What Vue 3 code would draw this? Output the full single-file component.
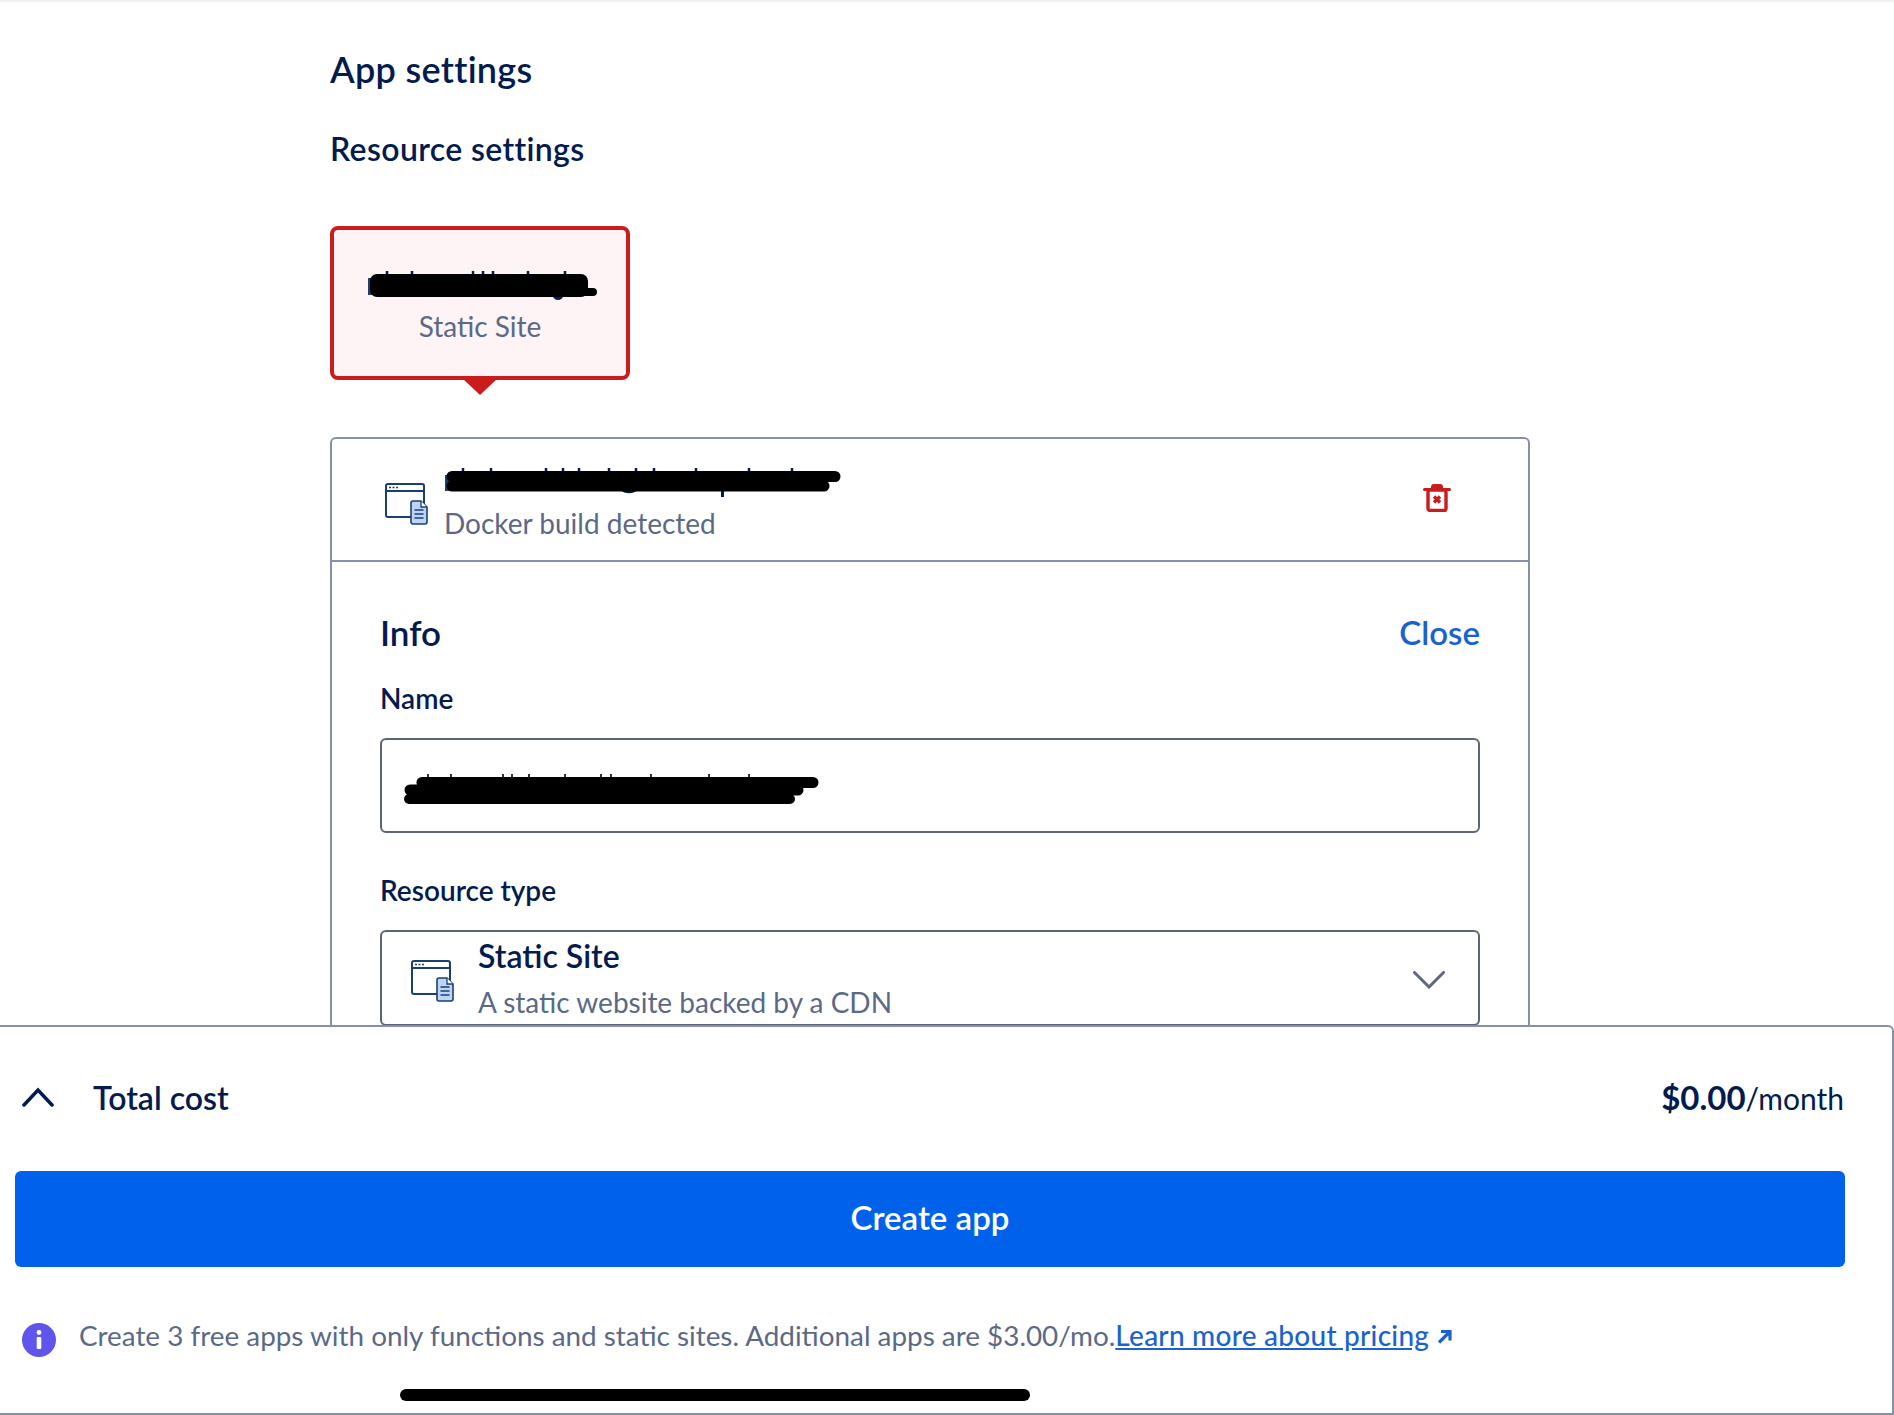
<script setup>
const inkTicksTab = [19, 44, 105, 115, 125, 160, 197]
const inkTicksHead = [18, 46, 101, 118, 134, 164, 191, 209, 251, 304, 347]
const inkTicksInput = [24, 47, 99, 108, 125, 161, 197, 207, 247, 305, 345]
</script>

<template>
  <div class="page">
    <div class="topline"></div>
    <main class="content">
      <h1 class="app-title">App settings</h1>
      <h2 class="res-title">Resource settings</h2>

      <div class="tab">
        <div class="tab-name">
          <svg class="ink ink-tab" viewBox="0 0 232 32">
            <path v-for="x in inkTicksTab" :key="x" :d="`M${x} 2v4`" stroke="#031b4e" stroke-width="2.500" />
            <path d="M0 9h4v17H0z" fill="#1c3f73" />
            <path d="M185 27a5 4 0 0 0 10 0z" fill="#031b4e" />
            <rect x="2" y="5" width="218" height="23" rx="7" fill="#000" />
            <path d="M214 23h11" stroke="#000" stroke-width="8" stroke-linecap="round" />
          </svg>
        </div>
        <div class="tab-sub">Static Site</div>
        <span class="tab-arrow"></span>
      </div>

      <section class="panel">
        <header class="panel-head">
          <svg class="ink ink-head" viewBox="0 0 396 30">
            <path v-for="x in inkTicksHead" :key="x" :d="`M${x} 2v4`" stroke="#031b4e" stroke-width="2.500" />
            <path d="M0 9h4v16H0z" fill="#1c3f73" />
            <path d="M176 24a9 6 0 0 0 16 0zM276 24h3v7h-3z" fill="#031b4e" />
            <path d="M7 10.500H390" stroke="#000" stroke-width="11" stroke-linecap="round" />
            <path d="M7 20H379" stroke="#000" stroke-width="11" stroke-linecap="round" />
          </svg>
          <svg class="site-icon" viewBox="0 0 44 42">
            <rect x="1" y="1" width="38" height="33" rx="2" fill="#fff" stroke="#1c3f73" stroke-width="2" />
            <path d="M1 8h38" stroke="#1c3f73" stroke-width="2" />
            <path d="M4 4.500h2M7.500 4.500h2M11 4.500h2" stroke="#1c3f73" stroke-width="1.500" />
            <path d="M28 18h8l6 6v15a2 2 0 0 1-2 2H28a2 2 0 0 1-2-2V20a2 2 0 0 1 2-2z" fill="#bcd4f6" stroke="#1c3f73" stroke-width="1.600" />
            <path d="M36 18v6h6" fill="#fff" stroke="#1c3f73" stroke-width="1.300" />
            <path d="M29.500 27h9M29.500 31h9M29.500 35h9" stroke="#1c3f73" stroke-width="1.700" />
          </svg>
          <div class="head-text">
            <div class="head-sub">Docker build detected</div>
          </div>
          <svg class="trash" viewBox="0 0 28 29">
            <path d="M1.500 6.500h25" stroke="#c91c1c" stroke-width="3" stroke-linecap="round" />
            <path d="M8 6V4a3 3 0 0 1 3-3h6a3 3 0 0 1 3 3v2z" fill="#c91c1c" />
            <rect x="5" y="7" width="18" height="20.500" rx="2" fill="#fff" stroke="#c91c1c" stroke-width="3.400" />
            <path d="M11 13.500l6 6M17 13.500l-6 6" stroke="#c91c1c" stroke-width="3.400" />
          </svg>
        </header>

        <div class="panel-body">
          <div class="info-row">
            <h3 class="info-title">Info</h3>
            <a class="close">Close</a>
          </div>
          <label class="field-label name-label">Name</label>
          <div class="input">
            <svg class="ink ink-input" viewBox="0 0 416 34">
              <path v-for="x in inkTicksInput" :key="x" :d="`M${x} 3v4`" stroke="#333" stroke-width="2" />
              <path d="M18 11.500H409" stroke="#000" stroke-width="11" stroke-linecap="round" />
              <path d="M6 19H394" stroke="#000" stroke-width="11" stroke-linecap="round" />
              <path d="M5 28H386" stroke="#000" stroke-width="10" stroke-linecap="round" />
            </svg>
          </div>
          <label class="field-label type-label">Resource type</label>
          <div class="select">
            <svg class="site-icon select-icon" viewBox="0 0 44 42">
              <rect x="1" y="1" width="38" height="33" rx="2" fill="#fff" stroke="#1c3f73" stroke-width="2" />
              <path d="M1 8h38" stroke="#1c3f73" stroke-width="2" />
              <path d="M4 4.500h2M7.500 4.500h2M11 4.500h2" stroke="#1c3f73" stroke-width="1.500" />
              <path d="M28 18h8l6 6v15a2 2 0 0 1-2 2H28a2 2 0 0 1-2-2V20a2 2 0 0 1 2-2z" fill="#bcd4f6" stroke="#1c3f73" stroke-width="1.600" />
              <path d="M36 18v6h6" fill="#fff" stroke="#1c3f73" stroke-width="1.300" />
              <path d="M29.500 27h9M29.500 31h9M29.500 35h9" stroke="#1c3f73" stroke-width="1.700" />
            </svg>
            <div class="select-text">
              <div class="select-name">Static Site</div>
              <div class="select-sub">A static website backed by a CDN</div>
            </div>
            <svg class="select-chev" viewBox="0 0 32 18">
              <path d="M1.500 1.500L16 16 30.500 1.500" fill="none" stroke="#5f6880" stroke-width="3" stroke-linecap="round" />
            </svg>
          </div>
        </div>
      </section>
    </main>

    <footer class="footer">
      <div class="cost-row">
        <svg class="cost-chev" viewBox="0 0 32 20">
          <path d="M2 18L16 3l14 15" fill="none" stroke="#031b4e" stroke-width="3.500" stroke-linecap="round" />
        </svg>
        <span class="cost-label">Total cost</span>
        <span class="cost-value"><b>$0.00</b>/month</span>
      </div>
      <button class="create">Create app</button>
      <div class="note">
        <svg class="note-icon" viewBox="0 0 34 34">
          <circle cx="17" cy="17" r="17" fill="#5f55ec" />
          <circle cx="17" cy="9.500" r="2.400" fill="#fff" />
          <rect x="14.700" y="14" width="4.600" height="12" rx="1" fill="#fff" />
        </svg>
        <p class="note-text">Create 3 free apps with only functions and static sites. Additional apps are $3.00/mo.<a class="note-link">Learn more about pricing</a></p>
        <svg class="note-arrow" viewBox="0 0 15 15">
          <path d="M2 13.500L12.500 3M4 2.500h9v9" fill="none" stroke="#1c62cf" stroke-width="3.200" />
        </svg>
      </div>
      <div class="homebar"></div>
    </footer>
  </div>
</template>

<style>
html, body { margin: 0; background: #fff; }
</style>

<style scoped>
.page {
  position: relative;
  height: 1415px;
  overflow: hidden;
  background: #fff;
  color: #031b4e;
  font-family: "Lato", "Liberation Sans", sans-serif;
}
.topline { height: 2px; background: #f0f0f0; }
.content { padding: 46px 364px 0 330px; }
.app-title { margin: 0; font-size: 36px; line-height: 42px; font-weight: 600; letter-spacing: 0.3px; }
.res-title { margin: 41px 0 0; font-size: 32px; line-height: 36px; font-weight: 600; letter-spacing: 0.35px; }

.tab {
  position: relative;
  box-sizing: border-box;
  width: 300px;
  height: 154px;
  margin-top: 59px;
  border: 4px solid #c91c1c;
  border-radius: 8px;
  background: #fef4f5;
  text-align: center;
}
.tab-name { height: 36px; margin-top: 43px; }
.tab-sub { font-size: 28px; line-height: 34px; color: #5b6987; }
.tab-arrow {
  position: absolute;
  left: 129px;
  bottom: -19px;
  width: 0;
  height: 0;
  border-left: 17px solid transparent;
  border-right: 17px solid transparent;
  border-top: 16px solid #c91c1c;
}
.ink { position: absolute; display: block; overflow: visible; }
.ink-tab { left: 34px; top: 39px; width: 232px; height: 32px; }
.ink-head { left: 113px; top: 27px; width: 396px; height: 30px; }
.ink-input { left: 22px; top: 31px; width: 416px; height: 34px; }

.panel {
  box-sizing: border-box;
  width: 1200px;
  height: 800px;
  margin-top: 57px;
  border: 2px solid #8690a8;
  border-radius: 6px;
}
.panel-head {
  position: relative;
  box-sizing: border-box;
  display: flex;
  align-items: center;
  height: 123px;
  padding: 0 77px 0 53px;
  border-bottom: 2px solid #8690a8;
}
.site-icon { width: 44px; height: 42px; flex: none; }
.panel-head .site-icon { margin-top: 8px; }
.head-text { flex: 1; align-self: flex-start; margin-left: 15px; padding-top: 67px; }
.head-sub { font-size: 28px; line-height: 34px; color: #5b6987; }
.trash { width: 28px; height: 29px; flex: none; margin-bottom: 4px; }
.panel-body { padding: 0 48px; }
.info-row { display: flex; justify-content: space-between; align-items: center; height: 42px; margin-top: 49px; }
.info-title { margin: 0; font-size: 35px; line-height: 42px; font-weight: 600; }
.close { font-size: 33px; font-weight: 600; color: #1c62cf; }
.field-label { display: block; font-size: 28px; line-height: 32px; font-weight: 600; }
.name-label { margin-top: 29px; }
.input {
  position: relative;
  box-sizing: border-box;
  height: 95px;
  margin-top: 24px;
  border: 2px solid #5b6478;
  border-radius: 6px;
}
.type-label { margin-top: 41px; }
.select {
  position: relative;
  box-sizing: border-box;
  display: flex;
  align-items: center;
  height: 96px;
  margin-top: 24px;
  padding: 0 33px 0 29px;
  border: 2px solid #5b6478;
  border-radius: 6px;
}
.select-icon { margin-top: 6px; }
.select-text { flex: 1; margin-left: 23px; }
.select-name { font-size: 32px; line-height: 38px; font-weight: 600; }
.select-sub { font-size: 28px; line-height: 34px; color: #5b6987; margin-top: 10px; }
.select-chev { width: 32px; height: 18px; flex: none; margin-top: 3px; }

.footer {
  position: absolute;
  left: 0;
  right: 0;
  bottom: 0;
  box-sizing: border-box;
  height: 390px;
  background: #fff;
  border: 2px solid #8690a8;
  border-left: 0;
  border-top-right-radius: 6px;
}
.cost-row { display: flex; align-items: center; height: 42px; padding: 49px 48px 0 22px; }
.cost-chev { width: 32px; height: 20px; flex: none; }
.cost-label { margin-left: 39px; flex: 1; font-size: 32px; font-weight: 600; }
.cost-value { font-size: 30px; }
.cost-value b { font-size: 33px; font-weight: 700; }
.create {
  display: block;
  width: 1830px;
  height: 96px;
  margin: 53px 0 0 15px;
  padding: 0 0 5px;
  border: 0;
  border-radius: 6px;
  background: #0061eb;
  color: #fff;
  font: 600 33px "Lato", "Liberation Sans", sans-serif;
}
.note { display: flex; align-items: center; height: 34px; margin: 56px 0 0 22px; }
.note-icon { width: 34px; height: 34px; flex: none; }
.note-text { margin: 0 0 10px 23px; font-size: 27.850px; line-height: 34px; color: #5b6987; white-space: nowrap; }
.note-link { color: #1c62cf; font-size: 28px; font-weight: 500; letter-spacing: 0.25px; text-decoration: underline; }
.note-arrow { width: 15px; height: 15px; margin: 0 0 8px 8px; flex: none; }
.homebar { width: 630px; height: 12px; margin: 32px 0 0 400px; border-radius: 6px; background: #000; }
</style>
